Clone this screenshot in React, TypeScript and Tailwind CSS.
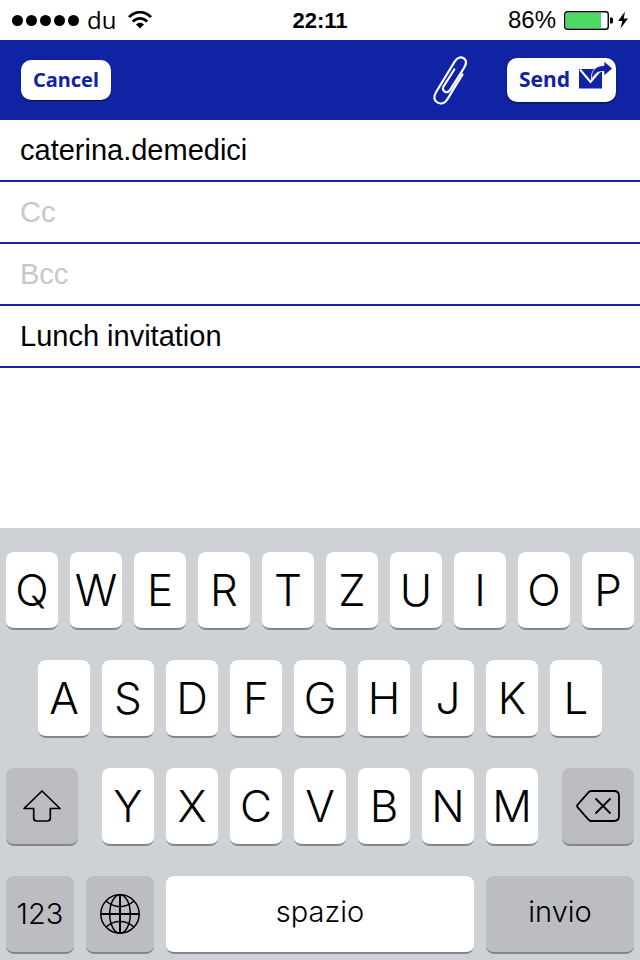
/**
 * Compose Mail Screen.
 *
 * Message header fields with the on-screen QWERTZ keyboard below.
 */

import type { ReactNode } from 'react'
import { clsx } from 'clsx'

const TOP_ROW = ['Q', 'W', 'E', 'R', 'T', 'Z', 'U', 'I', 'O', 'P']
const HOME_ROW = ['A', 'S', 'D', 'F', 'G', 'H', 'J', 'K', 'L']
const BOTTOM_ROW = ['Y', 'X', 'C', 'V', 'B', 'N', 'M']

function WifiIcon() {
  return (
    <svg className="w-6 h-[18px]" viewBox="0 0 24 18" fill="none" stroke="#000" strokeWidth="2.6">
      <path d="M1 6.2C7.4-.6 16.6-.6 23 6.2" />
      <path d="M4.8 10.600c4.2-4.300 10.200-4.300 14.400 0" />
      <path d="M12 17.6l-4-4.2c2.4-2.2 5.6-2.2 8 0z" fill="#000" stroke="none" />
    </svg>
  )
}

function BatteryIcon() {
  return (
    <svg className="w-[50px] h-5" viewBox="0 0 50 20">
      <rect x="0.75" y="1.75" width="43.5" height="17.5" rx="2.5" fill="#fff" stroke="#000" strokeWidth="1.4" />
      <rect x="2" y="3" width="35" height="15" fill="#4cd964" />
      <path d="M46 7.5h1.5q1.5 0 1.5 1.5v3q0 1.5-1.5 1.5H46z" fill="#000" />
    </svg>
  )
}

function BoltIcon() {
  return (
    <svg className="w-[10px] h-[18px]" viewBox="0 0 10 18">
      <path d="M7 .5L0 10h4.3L2.5 17.5 10 7.5H5.7z" fill="#000" />
    </svg>
  )
}

function PaperclipIcon() {
  return (
    <svg
      className="w-9 h-[52px]"
      viewBox="0 0 36 52"
      fill="none"
      stroke="#fff"
      strokeWidth="2.2"
      strokeLinecap="round"
      strokeLinejoin="round"
    >
      <path d="M22.3 15.5L11.500 32.500c-2.500 4.700 3.800 8 6.800 3.200L32 14c3-4.800 2.500-8-.3-9.700-3-1.800-6.500-.8-8.900 3L4 38.300c-2.700 4.500-2 8.200 1.200 10.100 3.500 2 7.600.9 10.100-3.100L30.500 20.500" />
    </svg>
  )
}

function SendIcon() {
  return (
    <svg className="w-[34px] h-10" viewBox="0 0 34 40">
      <rect x="0" y="9" width="23" height="19.500" fill="#1023a5" />
      <path d="M1 9.500l10.500 12.500L22 9.500" fill="none" stroke="#fff" strokeWidth="2" />
      <path
        d="M12.500 19.500C11.500 11 16.500 5.500 25 5.500V1l8.500 7.500L25 16v-4.500c-6-.3-9.500 2-12.500 8z"
        fill="#1023a5"
        stroke="#fff"
        strokeWidth="0.8"
      />
    </svg>
  )
}

function ShiftIcon() {
  return (
    <svg className="w-[38px] h-8" viewBox="0 0 38 32" fill="none" stroke="#000" strokeWidth="1.7" strokeLinejoin="round">
      <path d="M19 1L1 18.5h9.700V28q0 3 3 3h10.600q3 0 3-3v-9.500H37z" />
    </svg>
  )
}

function DeleteIcon() {
  return (
    <svg className="w-11 h-8" viewBox="0 0 44 32" fill="none" stroke="#000" strokeWidth="1.8">
      <path d="M15.5 1H38q5 0 5 5v20q0 5-5 5H15.5q-1.5 0-2.6-1L1.7 17.3q-1.2-1.3 0-2.6L12.9 2q1.1-1 2.6-1z" />
      <path d="M19.5 8.500l15 15M34.500 8.500l-15 15" />
    </svg>
  )
}

function GlobeIcon() {
  return (
    <svg className="w-10 h-10" viewBox="0 0 40 40" fill="none" stroke="#000" strokeWidth="1.5">
      <circle cx="20" cy="20" r="19.2" />
      <ellipse cx="20" cy="20" rx="10.3" ry="19.2" />
      <path d="M6 7c8.5 7.500 19.500 7.500 28 0M6 33c8.500-7.500 19.500-7.500 28 0" />
      <path d="M20 1v38M1 20h38" strokeWidth="2" />
    </svg>
  )
}

interface KeyProps {
  children: ReactNode
  className: string
  label?: string
  dark?: boolean
}

function Key({ children, className, label, dark = false }: KeyProps) {
  return (
    <button
      type="button"
      aria-label={label}
      className={clsx(
        'h-[78px] min-w-0 flex items-center justify-center rounded-lg border-b-2 border-[#85878a]',
        dark ? 'bg-[#bbbdc1]' : 'bg-white',
        className
      )}
    >
      {children}
    </button>
  )
}

function LetterKeys({ letters }: { letters: string[] }) {
  return letters.map((letter) => (
    <Key key={letter} className="flex-1 text-[44px] leading-none">
      {letter}
    </Key>
  ))
}

interface FieldProps {
  name: string
  value?: string
}

function Field({ name, value }: FieldProps) {
  return (
    <input
      type="text"
      aria-label={name}
      placeholder={name}
      defaultValue={value}
      className="block w-full h-[62px] px-5 border-b-2 border-[#1023a5] bg-white text-[29px] text-black placeholder:text-[#c7c7cd] outline-none"
    />
  )
}

export default function App() {
  return (
    <div className="min-h-screen flex flex-col bg-white font-['Liberation_Sans',Arial,sans-serif] text-black">
      <div className="h-10 shrink-0 grid grid-cols-3 items-center px-3 text-[24px]">
        <div className="flex items-center gap-2">
          <div className="flex gap-[3px]">
            {[1, 2, 3, 4, 5].map((dot) => (
              <span key={dot} className="w-[11px] h-[11px] rounded-full bg-black" />
            ))}
          </div>
          <span className="font-['Open_Sans',sans-serif] pr-1">du</span>
          <WifiIcon />
        </div>
        <span className="text-center font-bold text-[22px]">22:11</span>
        <div className="flex items-center justify-end gap-2">
          <span>86%</span>
          <div className="flex items-center gap-1">
            <BatteryIcon />
            <BoltIcon />
          </div>
        </div>
      </div>

      <header className="h-20 shrink-0 flex items-center justify-between pl-[21px] pr-6 bg-[#1023a5] font-['Noto_Sans',sans-serif] font-bold text-[#1023a5]">
        <button
          type="button"
          className="w-[90px] h-10 rounded-[10px] bg-white text-[20px] shadow-[0_1px_1px_rgba(0,0,0,0.6)]"
        >
          Cancel
        </button>
        <div className="flex items-center gap-[39px]">
          <button type="button" aria-label="Attach file">
            <PaperclipIcon />
          </button>
          <button
            type="button"
            className="w-[109px] h-11 flex items-center justify-between pl-3 pr-[3px] rounded-[10px] bg-white text-[21px] shadow-[0_1px_2px_rgba(0,0,0,0.7)]"
          >
            Send
            <SendIcon />
          </button>
        </div>
      </header>

      <main className="flex-1 flex flex-col">
        <Field name="To" value="caterina.demedici" />
        <Field name="Cc" />
        <Field name="Bcc" />
        <Field name="Subject" value="Lunch invitation" />
        <textarea aria-label="Message" className="flex-1 w-full min-h-40 p-5 resize-none text-[29px] outline-none" />
      </main>

      <div className="shrink-0 flex flex-col gap-[30px] px-[6px] pt-6 pb-[6px] bg-[#ced1d5] font-['Inter',sans-serif] font-light">
        <div className="flex gap-3">
          <LetterKeys letters={TOP_ROW} />
        </div>
        <div className="flex gap-3 px-8">
          <LetterKeys letters={HOME_ROW} />
        </div>
        <div className="flex gap-6">
          <Key className="w-[72px]" label="Shift" dark>
            <ShiftIcon />
          </Key>
          <div className="flex-1 flex gap-3">
            <LetterKeys letters={BOTTOM_ROW} />
          </div>
          <Key className="w-[72px]" label="Delete" dark>
            <DeleteIcon />
          </Key>
        </div>
        <div className="flex gap-3 text-[29px]">
          <Key className="w-[68px]" dark>
            123
          </Key>
          <Key className="w-[68px]" label="Next keyboard" dark>
            <GlobeIcon />
          </Key>
          <Key className="flex-1 pb-1">spazio</Key>
          <Key className="w-[148px] pb-1" dark>
            invio
          </Key>
        </div>
      </div>
    </div>
  )
}
